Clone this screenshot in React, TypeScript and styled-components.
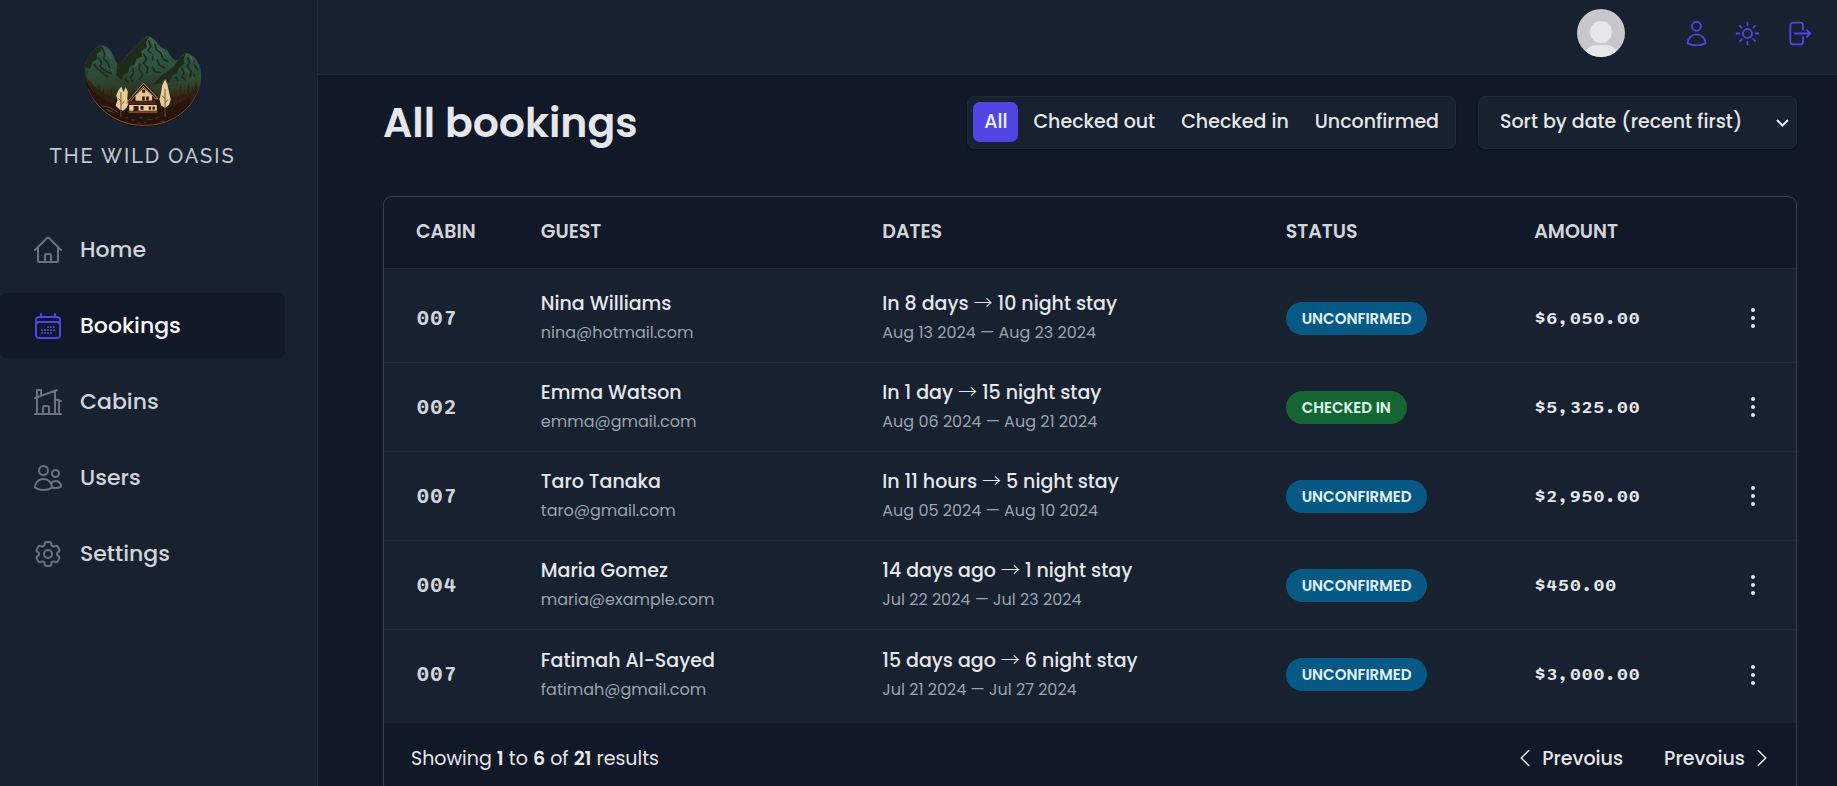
import React from "react";
import styled, { createGlobalStyle, css } from "styled-components";
import {
  HiOutlineHome,
  HiOutlineCalendarDays,
  HiOutlineHomeModern,
  HiOutlineUsers,
  HiOutlineCog6Tooth,
  HiOutlineUser,
  HiOutlineSun,
  HiOutlineArrowRightOnRectangle,
  HiEllipsisVertical,
  HiOutlineChevronLeft,
  HiOutlineChevronRight,
} from "react-icons/hi2";

const color = {
  page: "#111827",
  panel: "#18212f",
  line: "#1f2937",
  border: "#374151",
  muted: "#6b7280",
  soft: "#9ca3af",
  text: "#d1d5db",
  bright: "#e5e7eb",
  brand: "#4f46e5",
};

const GlobalStyle = createGlobalStyle`
  *, *::before, *::after { box-sizing: border-box; margin: 0; padding: 0; }
  body {
    font-family: Poppins, Inter, "Open Sans", sans-serif;
    font-size: 19px;
    line-height: 27px;
    color: ${color.bright};
    background: ${color.page};
  }
  button, select { font: inherit; color: inherit; border: none; background: none; cursor: pointer; }
  a { color: inherit; text-decoration: none; }
  ul { list-style: none; }
`;

const Shell = styled.div`
  display: grid;
  grid-template-columns: 318px 1fr;
  grid-template-rows: auto 1fr;
  height: 100vh;
`;

const Sidebar = styled.aside`
  grid-row: 1 / -1;
  display: flex;
  flex-direction: column;
  gap: 47px;
  padding: 36px 32px 32px 0;
  background: ${color.panel};
  border-right: 1px solid ${color.line};
`;

const Brand = styled.div`
  display: flex;
  flex-direction: column;
  align-items: center;
  gap: 16px;
  font-family: Raleway, Lato, sans-serif;
  font-weight: 500;
  font-size: 20px;
  letter-spacing: 2px;
  white-space: nowrap;
  color: #c3c8d0;
  svg {
    width: 118px;
    height: 91px;
  }
`;

const NavList = styled.ul`
  display: flex;
  flex-direction: column;
  gap: 11px;
`;

const NavLink = styled.a<{ $active?: boolean }>`
  display: flex;
  align-items: center;
  gap: 16px;
  height: 65px;
  padding: 0 32px;
  border-radius: 7px;
  font-size: 22px;
  font-weight: 500;
  color: ${color.text};
  svg {
    width: 32px;
    height: 32px;
    color: ${color.muted};
  }
  ${(p) =>
    p.$active &&
    css`
      color: #f9fafb;
      background: ${color.page};
      svg {
        color: ${color.brand};
      }
    `}
`;

const TopBar = styled.header`
  display: flex;
  align-items: center;
  justify-content: flex-end;
  gap: 57px;
  padding: 9px 24px 17px;
  background: ${color.panel};
  border-bottom: 1px solid ${color.line};
`;

const Avatar = styled.svg`
  width: 48px;
  height: 48px;
  border-radius: 50%;
`;

const TopActions = styled.div`
  display: flex;
  gap: 22px;
`;

const IconButton = styled.button<{ $size: number; $brand?: boolean }>`
  display: flex;
  color: ${(p) => (p.$brand ? color.brand : color.bright)};
  svg {
    width: ${(p) => p.$size}px;
    height: ${(p) => p.$size}px;
  }
`;

const Main = styled.main`
  min-height: 0;
  overflow-y: auto;
  scrollbar-width: none;
  padding: 21px 40px 0 65px;
`;

const PageHead = styled.div`
  display: flex;
  align-items: center;
  justify-content: space-between;
  margin-bottom: 47px;
`;

const Title = styled.h1`
  font-size: 41px;
  line-height: 53px;
  font-weight: 600;
`;

const Controls = styled.div`
  display: flex;
  gap: 22px;
`;

const FilterGroup = styled.div`
  display: flex;
  align-items: flex-start;
  gap: 4px;
  height: 53px;
  padding: 5px;
  background: ${color.panel};
  border: 1px solid ${color.line};
  border-radius: 7px;
  box-shadow: 0 1px 2px rgba(0, 0, 0, 0.4);
`;

const FilterButton = styled.button<{ $active?: boolean }>`
  height: 40px;
  padding: 0 11px 2px;
  border-radius: 7px;
  font-weight: 500;
  color: ${(p) => (p.$active ? "#eef2ff" : color.bright)};
  background: ${(p) => (p.$active ? color.brand : "transparent")};
`;

const SelectBox = styled.div`
  position: relative;
  svg {
    position: absolute;
    right: 8px;
    top: 20px;
    width: 13px;
    height: 13px;
    pointer-events: none;
  }
`;

const Select = styled.select`
  appearance: none;
  width: 319px;
  height: 53px;
  padding: 0 32px 2px 21px;
  font-weight: 500;
  background: ${color.panel};
  border: 1px solid ${color.line};
  border-radius: 7px;
  box-shadow: 0 1px 2px rgba(0, 0, 0, 0.4);
`;

const TableCard = styled.div`
  border: 1px solid ${color.border};
  border-radius: 9px;
  overflow: hidden;
`;

const Table = styled.table`
  display: block;
`;

const rowGrid = css`
  display: grid;
  grid-template-columns: 0.6fr 2fr 2.4fr 1.4fr 1fr 48px;
  column-gap: 32px;
  align-items: center;
  padding: 0 27px 0 32px;
  text-align: left;
`;

const TableHead = styled.thead`
  display: block;
  border-bottom: 1px solid ${color.line};
`;

const HeadRow = styled.tr`
  ${rowGrid}
  height: 71px;
  text-transform: uppercase;
  color: ${color.text};
  th {
    padding-bottom: 3px;
    font-weight: 600;
  }
`;

const TableBody = styled.tbody`
  display: block;
  padding: 5px 0 4px;
  background: ${color.panel};
`;

const Row = styled.tr`
  ${rowGrid}
  height: 89px;
  &:not(:last-child) {
    border-bottom: 1px solid ${color.line};
  }
`;

const Cabin = styled.td`
  font-family: Sono, "Liberation Mono", monospace;
  font-size: 22px;
  font-weight: 600;
  color: ${color.text};
`;

const Amount = styled.td`
  font-family: Sono, "Liberation Mono", monospace;
  font-weight: 600;
`;

const Stacked = styled.td`
  display: flex;
  flex-direction: column;
  gap: 2px;
  white-space: nowrap;
`;

const Primary = styled.span`
  font-weight: 500;
`;

const Arrow = styled.span`
  font-family: "Noto Sans CJK JP", sans-serif;
  font-weight: 300;
  line-height: 1;
`;

const Secondary = styled.span`
  font-size: 16px;
  color: ${color.soft};
`;

const Tag = styled.span<{ $tone: "blue" | "green" }>`
  display: inline-block;
  padding: 3px 16px;
  border-radius: 100px;
  font-size: 15px;
  font-weight: 600;
  text-transform: uppercase;
  ${(p) =>
    p.$tone === "blue"
      ? css`
          color: #e0f2fe;
          background: #075985;
        `
      : css`
          color: #dcfce7;
          background: #166534;
        `}
`;

const ActionCell = styled.td`
  display: flex;
  justify-content: flex-end;
`;

const TableFoot = styled.footer`
  display: flex;
  align-items: center;
  justify-content: space-between;
  height: 70px;
  padding: 0 22px 0 27px;
  b {
    font-weight: 600;
  }
`;

const Pager = styled.div`
  display: flex;
  gap: 41px;
`;

const PageButton = styled.button`
  display: flex;
  align-items: center;
  gap: 5px;
  font-weight: 500;
  svg {
    width: 24px;
    height: 24px;
  }
`;

function LogoMark() {
  const silhouette =
    "M72 133C80 122 88 104 98 90C106 82 116 74 127 73C138 76 146 86 153 93C160 102 163 118 170 127C176 130 181 125 188 119C198 110 205 99 216 88C228 80 236 66 248 57C255 51 260 47 267 48C278 52 288 60 294 71C302 81 312 84 321 90C328 99 332 110 341 116C347 122 352 119 358 114C364 106 370 98 379 97C388 100 397 106 404 112C412 119 417 133 421 141C426 152 425 172 423 187C416 214 404 240 386 261C360 291 314 320 250 320C190 320 140 294 110 254C90 226 77 200 72 170Z";
  const pines = [
    [92, 176, 236], [104, 196, 246], [116, 190, 254], [129, 200, 262], [141, 207, 268],
    [153, 200, 274], [348, 205, 278], [361, 190, 274], [373, 204, 262], [385, 186, 252],
    [397, 196, 240], [408, 180, 228], [333, 212, 285],
  ];
  const glints = [
    [212, 300, 14], [236, 293, 10], [262, 299, 16], [284, 293, 12], [230, 309, 12],
    [196, 293, 8], [300, 304, 14], [252, 307, 7],
  ];
  return (
    <svg viewBox="71 47 355 274" role="img" aria-label="The Wild Oasis logo">
      <defs>
        <linearGradient id="slope" x1="0" y1="0" x2="0" y2="1">
          <stop offset="0" stopColor="#37634f" />
          <stop offset="0.4" stopColor="#2c4b39" />
          <stop offset="0.66" stopColor="#292d19" />
          <stop offset="0.8" stopColor="#2b190e" />
          <stop offset="1" stopColor="#24120c" />
        </linearGradient>
        <linearGradient id="mist" x1="0" y1="0" x2="0" y2="1">
          <stop offset="0" stopColor="#355c3f" stopOpacity="0.6" />
          <stop offset="1" stopColor="#352b14" stopOpacity="0" />
        </linearGradient>
        <clipPath id="crest">
          <path d={silhouette} />
        </clipPath>
      </defs>
      <g clipPath="url(#crest)">
        <path d={silhouette} fill="url(#slope)" />
        <path d="M70 140L98 90L127 73L122 92L109 101L112 116L97 124L91 142L83 150L80 180L70 190Z" fill="#202a18" />
        <path d="M267 48L257 66L261 80L243 93L246 109L229 116L222 132L207 140L204 158L190 164L184 180L168 166L171 128L190 119L218 88L248 57Z" fill="#202a18" />
        <path d="M379 97L370 117L374 130L357 143L350 160L336 166L326 190L318 174L297 190L280 193L304 166L340 140L358 114Z" fill="#202a18" />
        <g fill="none" stroke="#1d2a1b" strokeWidth="5" strokeLinecap="round" strokeLinejoin="round">
          <path d="M127 84L133 102L130 115L143 128L149 148M116 113L124 127L120 139L135 153L153 160M102 133L113 147L128 159L142 170" />
          <path d="M266 62L272 78L264 91L279 105L277 118M284 72L289 87L303 99L309 116L323 124M251 103L259 116L250 129L263 143L261 156M291 119L297 134L313 143M239 131L237 148L248 163L238 177M218 147L220 160L211 172L217 184M277 141L285 155L300 157M194 176L203 185" />
          <path d="M383 112L389 128L381 139L394 153L391 169M402 123L405 137L413 148M366 145L372 157L366 170L378 181M348 172L354 183L349 196M402 164L408 175" />
        </g>
        <g fill="none" stroke="#4b7a61" strokeWidth="3" strokeLinecap="round" opacity="0.65">
          <path d="M139 92L145 105L154 116M274 61L278 70M293 86L303 91L309 103M270 98L285 112M234 122L225 139M391 108L397 121L407 133M378 145L386 157M141 143L158 151" />
        </g>
        <path d="M76 140C112 160 145 178 174 188L216 202L190 268L110 256L70 190Z" fill="url(#mist)" />
        <path d="M278 196C320 190 390 182 424 158V240L370 270L290 260Z" fill="url(#mist)" />
        <path d="M70 160C88 188 108 207 136 223C190 250 312 250 424 208V330H70Z" fill="#2b190e" opacity="0.7" />
        {pines.map(([x, top, base]) => (
          <path key={x} d={`M${x} ${top}L${x + 9} ${base}H${x - 9}Z`} fill="#351f12" />
        ))}
        <path d="M70 170L98 214L145 245L200 267H315L390 234V330H70Z" fill="#24130c" opacity="0.8" />
        <path d="M126 258C143 258 157 266 173 277M138 268L160 277" fill="none" stroke="#8a6746" strokeWidth="2" />
        <g fill="#eacb9a">
          <path d="M183 199L190 216L196 201L203 214L201 235L206 248L199 263L188 272L178 268L166 257L172 239L168 227L174 211Z" />
          <path d="M315 177L322 193L327 216L332 238L327 254L316 263L303 256L298 238L303 217L306 197Z" />
        </g>
        <path d="M182 216V290M183 243L174 235M183 253L193 243M315 207V290M315 235L307 228M315 247L324 239" fill="none" stroke="#76532f" strokeWidth="3" />
        <path d="M201 243L249 195L292 240V280H207V250Z" fill="#281309" />
        <path d="M250 203L276 226V242H226V226Z" fill="#e7c491" />
        <path d="M207 255H290V272H207Z" fill="#edc995" />
        <path d="M197 251L250 189L294 236L286 236L250 199L209 245Z" fill="#3a2013" stroke="#d5af7a" strokeWidth="2" />
        <path d="M204 244L285 241L292 253H204Z" fill="#472918" />
        <g fill="#301b12">
          <path d="M246 208H255V218H246ZM246 229H254V241H246ZM258 229H266V241H258Z" />
          <path d="M220 258H235V274H220ZM241 258H250V269H241ZM266 259H273V269H266ZM277 259H284V269H277Z" />
        </g>
        <path d="M205 276H292" stroke="#a97b52" strokeWidth="3" />
        {glints.map(([x, y, w]) => (
          <path key={`${x}-${y}`} d={`M${x} ${y}h${w}`} stroke="#6e432b" strokeWidth="2" />
        ))}
        <path d="M82 207C107 264 167 316 250 316C330 316 389 277 416 210" fill="none" stroke="#875434" strokeWidth="3" />
      </g>
    </svg>
  );
}

const navItems = [
  { label: "Home", icon: HiOutlineHome },
  { label: "Bookings", icon: HiOutlineCalendarDays, active: true },
  { label: "Cabins", icon: HiOutlineHomeModern },
  { label: "Users", icon: HiOutlineUsers },
  { label: "Settings", icon: HiOutlineCog6Tooth },
];

const filters = ["All", "Checked out", "Checked in", "Unconfirmed"];

interface Booking {
  cabin: string;
  guest: string;
  email: string;
  when: string;
  stay: string;
  dates: string;
  status: "Unconfirmed" | "Checked in";
  amount: string;
}

const bookings: Booking[] = [
  { cabin: "007", guest: "Nina Williams", email: "nina@hotmail.com", when: "In 8 days", stay: "10 night stay", dates: "Aug 13 2024 — Aug 23 2024", status: "Unconfirmed", amount: "$6,050.00" },
  { cabin: "002", guest: "Emma Watson", email: "emma@gmail.com", when: "In 1 day", stay: "15 night stay", dates: "Aug 06 2024 — Aug 21 2024", status: "Checked in", amount: "$5,325.00" },
  { cabin: "007", guest: "Taro Tanaka", email: "taro@gmail.com", when: "In 11 hours", stay: "5 night stay", dates: "Aug 05 2024 — Aug 10 2024", status: "Unconfirmed", amount: "$2,950.00" },
  { cabin: "004", guest: "Maria Gomez", email: "maria@example.com", when: "14 days ago", stay: "1 night stay", dates: "Jul 22 2024 — Jul 23 2024", status: "Unconfirmed", amount: "$450.00" },
  { cabin: "007", guest: "Fatimah Al-Sayed", email: "fatimah@gmail.com", when: "15 days ago", stay: "6 night stay", dates: "Jul 21 2024 — Jul 27 2024", status: "Unconfirmed", amount: "$3,000.00" },
];

export default function App() {
  return (
    <>
      <GlobalStyle />
      <Shell>
        <Sidebar>
          <Brand>
            <LogoMark />
            <span>THE WILD OASIS</span>
          </Brand>
          <nav>
            <NavList>
              {navItems.map(({ label, icon: Icon, active }) => (
                <li key={label}>
                  <NavLink href="#" $active={active} aria-current={active ? "page" : undefined}>
                    <Icon />
                    <span>{label}</span>
                  </NavLink>
                </li>
              ))}
            </NavList>
          </nav>
        </Sidebar>

        <TopBar>
          <Avatar viewBox="0 0 48 48" role="img" aria-label="User avatar">
            <rect width="48" height="48" fill="#c7c8c9" />
            <circle cx="24" cy="23" r="11" fill="#e5e7e8" />
            <path d="M7 48C8 40 13 36 19 36H29C35 36 40 40 41 48Z" fill="#e5e7e8" />
          </Avatar>
          <TopActions>
            <IconButton $size={29} $brand aria-label="Account"><HiOutlineUser /></IconButton>
            <IconButton $size={29} $brand aria-label="Light mode"><HiOutlineSun /></IconButton>
            <IconButton $size={29} $brand aria-label="Log out"><HiOutlineArrowRightOnRectangle /></IconButton>
          </TopActions>
        </TopBar>

        <Main>
          <PageHead>
            <Title>All bookings</Title>
            <Controls>
              <FilterGroup>
                {filters.map((name, i) => (
                  <FilterButton key={name} $active={i === 0}>{name}</FilterButton>
                ))}
              </FilterGroup>
              <SelectBox>
                <Select aria-label="Sort bookings">
                  <option>Sort by date (recent first)</option>
                  <option>Sort by date (earlier first)</option>
                </Select>
                <svg viewBox="0 0 13 13" fill="none" stroke="currentColor" strokeWidth="2" aria-hidden="true">
                  <path d="M1 4L6.500 9.500L12 4" />
                </svg>
              </SelectBox>
            </Controls>
          </PageHead>

          <TableCard>
            <Table>
              <TableHead>
                <HeadRow>
                  <th>Cabin</th>
                  <th>Guest</th>
                  <th>Dates</th>
                  <th>Status</th>
                  <th>Amount</th>
                  <th aria-label="Actions" />
                </HeadRow>
              </TableHead>
              <TableBody>
                {bookings.map((b) => (
                  <Row key={b.email}>
                    <Cabin>{b.cabin}</Cabin>
                    <Stacked>
                      <Primary>{b.guest}</Primary>
                      <Secondary>{b.email}</Secondary>
                    </Stacked>
                    <Stacked>
                      <Primary>{b.when} <Arrow>→</Arrow> {b.stay}</Primary>
                      <Secondary>{b.dates}</Secondary>
                    </Stacked>
                    <td>
                      <Tag $tone={b.status === "Checked in" ? "green" : "blue"}>{b.status}</Tag>
                    </td>
                    <Amount>{b.amount}</Amount>
                    <ActionCell>
                      <IconButton $size={32} aria-label={`Actions for ${b.guest}`}><HiEllipsisVertical /></IconButton>
                    </ActionCell>
                  </Row>
                ))}
              </TableBody>
            </Table>
            <TableFoot>
              <p>Showing <b>1</b> to <b>6</b> of <b>21</b> results</p>
              <Pager>
                <PageButton><HiOutlineChevronLeft /><span>Prevoius</span></PageButton>
                <PageButton><span>Prevoius</span><HiOutlineChevronRight /></PageButton>
              </Pager>
            </TableFoot>
          </TableCard>
        </Main>
      </Shell>
    </>
  );
}
